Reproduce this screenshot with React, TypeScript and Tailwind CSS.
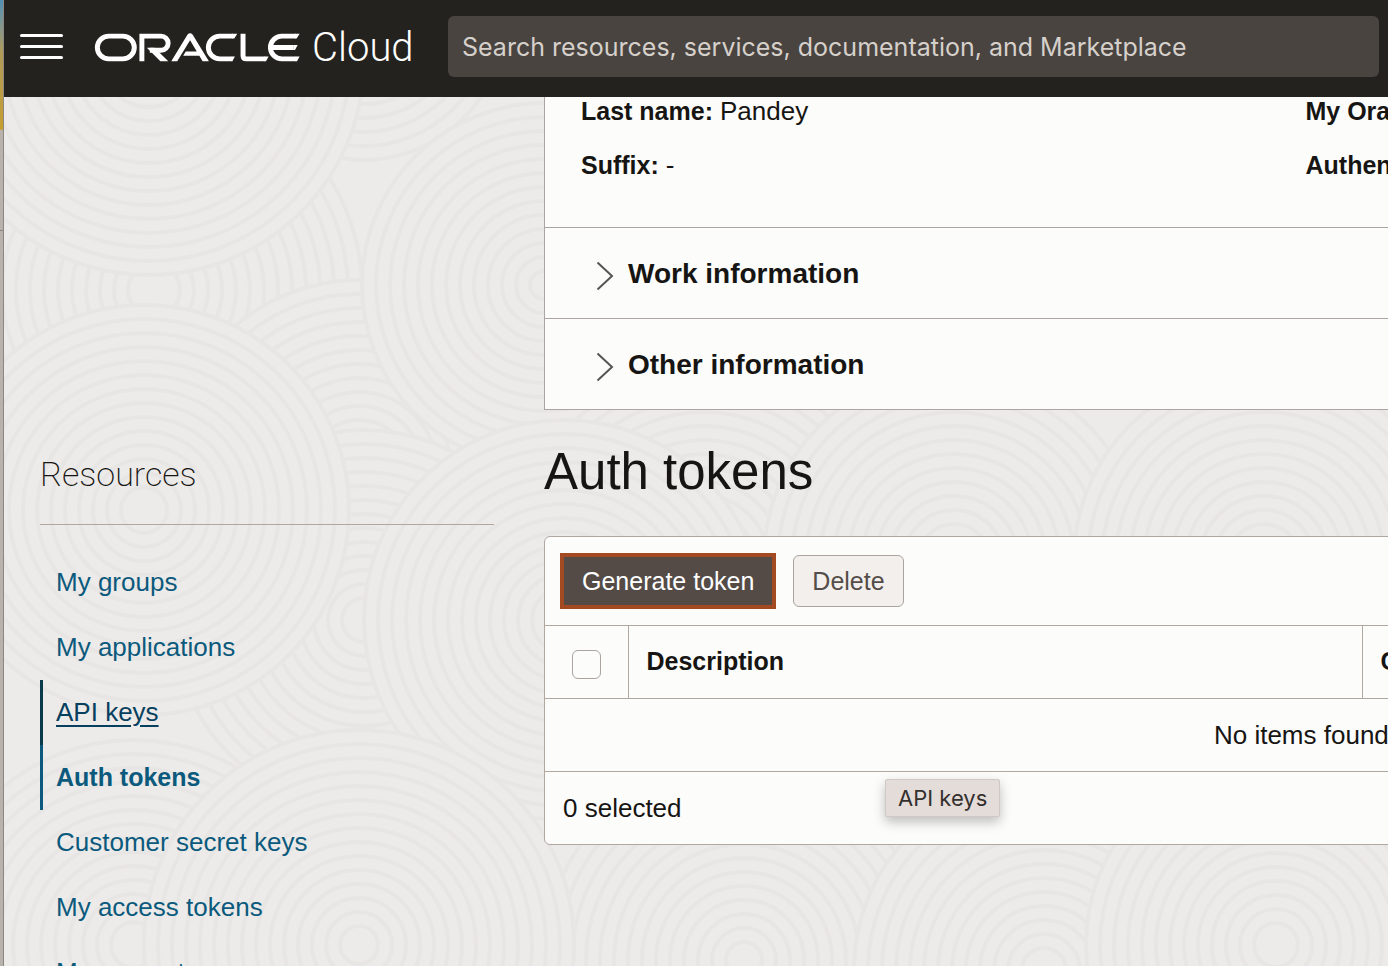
import React from "react";

type Cluster = { x: number; y: number; r: number };

// Painted in order: later clusters cover the earlier ones.
const clusters: Cluster[] = [
  { x: 360, y: 20, r: 140 },
  { x: 20, y: 290, r: 115 },
  { x: 150, y: 290, r: 208 },
  { x: 355, y: 470, r: 190 },
  { x: 540, y: 285, r: 182 },
  { x: 145, y: 60, r: 215 },
  { x: 700, y: 560, r: 190 },
  { x: 950, y: 560, r: 190 },
  { x: 1260, y: 560, r: 190 },
  { x: 360, y: 620, r: 190 },
  { x: 560, y: 620, r: 200 },
  { x: 140, y: 510, r: 205 },
  { x: 740, y: 960, r: 200 },
  { x: 1040, y: 970, r: 190 },
  { x: 130, y: 945, r: 205 },
  { x: 1272, y: 945, r: 190 },
  { x: 355, y: 945, r: 215 },
];

function Ripples() {
  return (
    <svg
      aria-hidden="true"
      className="absolute inset-0 h-full w-full"
      viewBox="0 0 1388 966"
      preserveAspectRatio="xMinYMin slice"
    >
      {clusters.map((c, i) => (
        <g key={i} fill="#edebe9" stroke="#e8e6e4" strokeWidth={4}>
          {Array.from({ length: Math.floor(c.r / 14) }, (_, k) => (
            <circle key={k} cx={c.x} cy={c.y} r={c.r - k * 14} />
          ))}
        </g>
      ))}
    </svg>
  );
}

function OracleLogo() {
  return (
    <svg
      role="img"
      aria-label="Oracle"
      className="h-[33px] w-[210px] shrink-0"
      viewBox="276 93 630 100"
      fill="none"
      stroke="#fff"
      strokeWidth={15}
    >
      <rect x="289" y="108.500" width="112" height="69" rx="34.500" />
      <path d="M424 185V108.500H482a21.500 21.500 0 0 1 0 43H448" />
      <path d="M439 144H462L504 185H480Z" fill="#fff" stroke="none" />
      <path
        d="M513 185 562 104Q570 96 578 104L627 185H608L570 121 531 185ZM549 168 557 155H600L608 168Z"
        fill="#fff"
        stroke="none"
      />
      <path d="M700 108.500H660a34.500 34.500 0 0 0 0 69H698" />
      <path d="M698 101H713L704 116H698ZM696 170H706L698 185H696Z" fill="#fff" stroke="none" />
      <path d="M730.500 101V168Q730.500 177.500 740 177.500H796" />
      <path d="M794 170H808L800 185H794Z" fill="#fff" stroke="none" />
      <path d="M890 108.500H848a34.500 34.500 0 0 0 0 69H892M814 143H884" />
      <path
        d="M888 101H902L893 116H888ZM883 135.500H896L888 150.500H883ZM890 170H902L894 185H890Z"
        fill="#fff"
        stroke="none"
      />
    </svg>
  );
}

function Header() {
  return (
    <header className="relative z-10 flex h-[97px] shrink-0 items-center bg-[#24221e] pr-[9px] pb-1 pl-4">
      <button type="button" aria-label="Menu" className="flex w-[43px] shrink-0 flex-col gap-2">
        <span className="h-[3px] rounded-full bg-white" />
        <span className="h-[3px] rounded-full bg-white" />
        <span className="h-[3px] rounded-full bg-white" />
      </button>
      <a href="#home" className="ml-[29px] flex shrink-0 items-center gap-[10px] pt-[2px]">
        <OracleLogo />
        <span className="w-[102px] font-['Roboto',sans-serif] text-[40px] leading-8 font-light text-white">
          Cloud
        </span>
      </a>
      <input
        type="search"
        aria-label="Search"
        placeholder="Search resources, services, documentation, and Marketplace"
        className="ml-[34px] h-[61px] min-w-0 flex-1 rounded-md bg-[#494440] px-[14px] font-['Inter',sans-serif] text-[25px] text-white placeholder:text-[#d6d0cb]"
      />
    </header>
  );
}

const resources = [
  { label: "My groups" },
  { label: "My applications" },
  { label: "API keys", style: "border-[#0b3a4b] text-[#07405f] underline decoration-2 underline-offset-4" },
  { label: "Auth tokens", style: "border-[#0b5a7d] text-[25px] font-bold text-[#0b5a7d]" },
  { label: "Customer secret keys" },
  { label: "My access tokens" },
  { label: "My requests" },
];

function Sidebar() {
  return (
    <nav aria-label="Resources" className="w-[454px] shrink-0 pt-[353px]">
      <h2 className="border-b border-[#b3a69e] pb-[25px] font-['Roboto',sans-serif] text-[34px] leading-[49px] font-extralight">
        Resources
      </h2>
      <ul className="pt-[25px]">
        {resources.map((r) => (
          <li key={r.label}>
            <a
              href="#resources"
              className={
                "flex h-[65px] items-center border-l-3 pl-[13px] " + (r.style ?? "border-transparent text-[#0b5a7d]")
              }
            >
              {r.label}
            </a>
          </li>
        ))}
      </ul>
    </nav>
  );
}

function Section({ title }: { title: string }) {
  return (
    <button
      type="button"
      className="flex h-[91px] w-full items-center gap-[14px] border-b border-[#aaa5a2] pt-[2px] pl-[51px] text-[28px] font-bold"
    >
      <svg
        aria-hidden="true"
        className="mt-1 h-[30px] w-[18px]"
        viewBox="0 0 18 30"
        fill="none"
        stroke="#555"
        strokeWidth="2"
      >
        <path d="M1.500 1.500 16 15 1.500 28.500" />
      </svg>
      {title}
    </button>
  );
}

function ProfilePanel() {
  return (
    <section className="border-l border-[#aaa5a2] bg-[#fcfcfa]">
      <dl className="grid grid-cols-2 gap-y-[26px] border-b border-[#aaa5a2] px-9 pb-12 leading-7">
        <div className="flex gap-[7px]">
          <dt className="text-[25px] font-bold">Last name:</dt>
          <dd>Pandey</dd>
        </div>
        <div>
          <dt className="text-[25px] font-bold">My Oracle Support account:</dt>
        </div>
        <div className="flex gap-[7px]">
          <dt className="text-[25px] font-bold">Suffix:</dt>
          <dd>-</dd>
        </div>
        <div>
          <dt className="text-[25px] font-bold">Authentication factor:</dt>
        </div>
      </dl>
      <Section title="Work information" />
      <Section title="Other information" />
    </section>
  );
}

function AuthTokens() {
  return (
    <section>
      <h1 className="pt-8 pb-[34px] text-[51px] leading-[60px]">Auth tokens</h1>
      <div className="relative rounded-md border border-[#b0a7a1] bg-[#fcfcfa]">
        <div className="flex h-[88px] items-center gap-[17px] px-[15px] text-[25px]">
          <button type="button" className="h-14 border-4 border-[#a34a22] bg-[#544b47] px-[18px] pt-px text-white">
            Generate token
          </button>
          <button
            type="button"
            className="h-[52px] rounded-md border border-[#aaa39e] bg-[#f3efec] px-[18px] pt-px text-[#544d49]"
          >
            Delete
          </button>
        </div>
        <table className="w-full table-fixed border-collapse">
          <thead>
            <tr className="h-[73px] border-y border-[#b0a7a1]">
              <th className="w-[83px] border-r border-[#b0a7a1]">
                <input
                  type="checkbox"
                  aria-label="Select all"
                  className="mx-auto mt-1 block size-[29px] appearance-none rounded-md border border-[#aaa39e] bg-[#fcfcfa]"
                />
              </th>
              <th className="w-[734px] border-r border-[#b0a7a1] px-[18px] text-left text-[25px]">Description</th>
              <th className="px-[18px] text-left text-[25px]">Created</th>
            </tr>
          </thead>
          <tbody>
            <tr className="h-[73px] border-b border-[#b0a7a1]">
              <td colSpan={3} className="text-center">
                No items found.
              </td>
            </tr>
          </tbody>
        </table>
        <p className="flex h-[72px] items-center px-[18px]">0 selected</p>
        <div
          role="tooltip"
          className="absolute bottom-[27px] left-[340px] rounded-xs border border-[#cfc8c5] bg-[#e4dcd9] px-3 font-['Inter',sans-serif] text-[22px] leading-9 text-[#34302e] shadow-[0_5px_12px_rgba(0,0,0,0.25)]"
        >
          API keys
        </div>
      </div>
    </section>
  );
}

export default function App() {
  return (
    <div className="flex h-screen overflow-hidden bg-[#edebe9] font-['Liberation_Sans',Arial,sans-serif] text-[26px] text-[#161513]">
      <div className="flex w-1 shrink-0 flex-col border-r border-[#8d8782] bg-[#b9b2ac]">
        <div className="h-[130px] rounded-b-xs bg-linear-to-b from-[#4e8fb5] via-[#b09a58] via-40% to-[#c79f2b]" />
        <div className="h-[101px] border-b border-[#8d8782]" />
      </div>
      <div className="relative flex min-w-0 flex-1 flex-col">
        <Header />
        <Ripples />
        <div className="relative flex min-h-0 flex-1 gap-[50px] overflow-hidden pl-9">
          <Sidebar />
          <main className="min-w-[1522px] flex-1">
            <ProfilePanel />
            <AuthTokens />
          </main>
        </div>
      </div>
    </div>
  );
}
